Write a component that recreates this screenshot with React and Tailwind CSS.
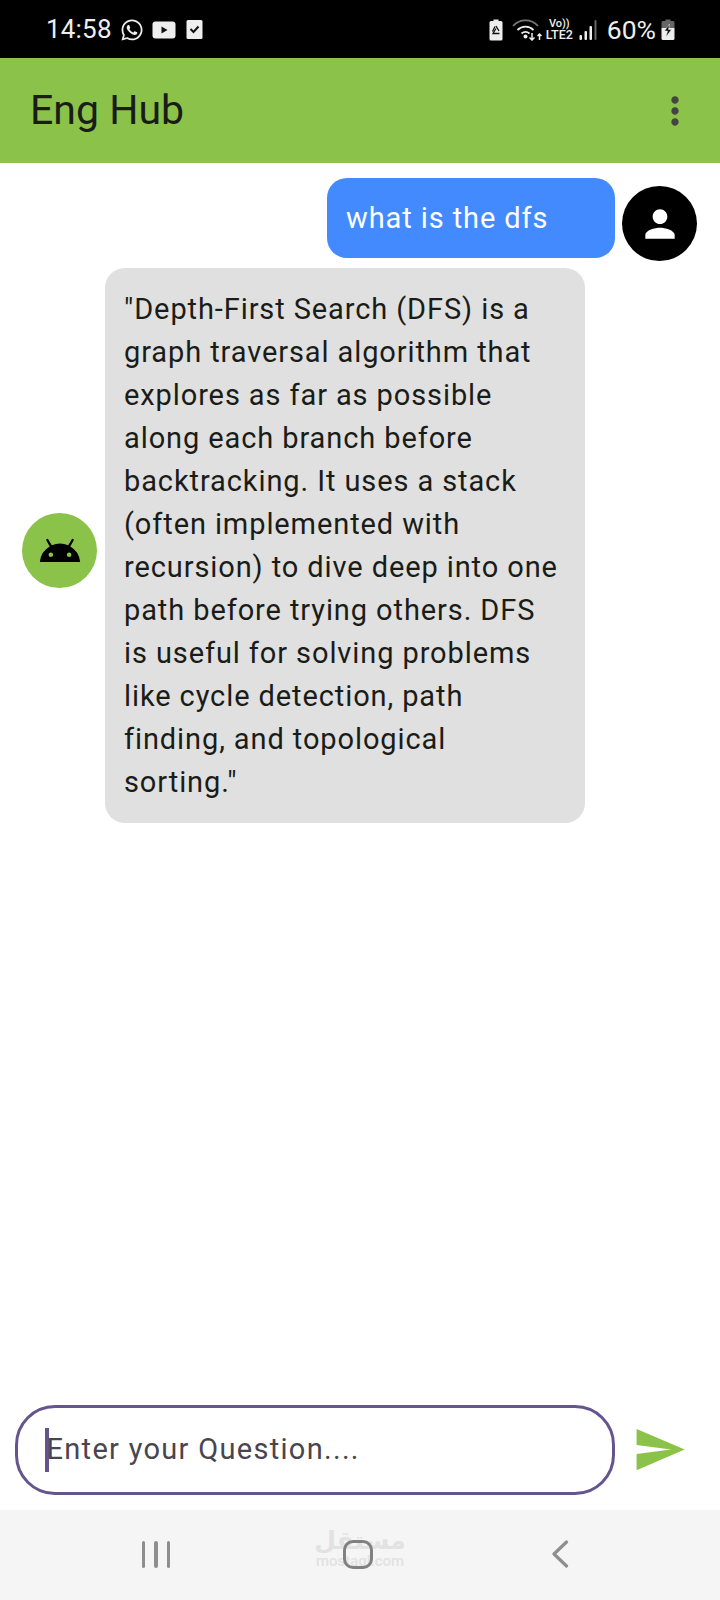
import React from 'react';
import { FaWhatsapp } from 'react-icons/fa';
import { MdPerson, MdAndroid, MdSend, MdMoreVert } from 'react-icons/md';

const font = { fontFamily: 'Roboto, sans-serif' };

const YoutubeIcon = () => (
  <svg width="24" height="18" viewBox="0 0 24 18">
    <rect x="0.5" y="0.5" width="23" height="17" rx="3" fill="#eee" />
    <path d="M9.5 5.5 L15.5 9 L9.5 12.5 Z" fill="#111" />
  </svg>
);

const TaskIcon = () => (
  <svg width="17" height="21" viewBox="0 0 17 21">
    <path d="M2 1 H15 Q16.500 1 16.500 2.500 V18.500 Q16.500 20 15 20 H2 Q0.500 20 0.500 18.500 V2.500 Q0.500 1 2 1 Z" fill="#eee" />
    <path d="M4.500 10 L7.500 13 L12.500 7.500" fill="none" stroke="#111" strokeWidth="2" />
  </svg>
);

const BatteryRecycle = () => (
  <svg width="14" height="22" viewBox="0 0 14 22">
    <path d="M4.500 0.500 H9.500 V2 H12 Q13.500 2 13.500 3.500 V20 Q13.500 21.500 12 21.500 H2 Q0.500 21.500 0.500 20 V3.500 Q0.500 2 2 2 H4.500 Z" fill="#eee" />
    <path d="M7 7 L10 12 M10.500 14.500 H4 L7 9.500 M3.500 12.500 L6 7.500" fill="none" stroke="#111" strokeWidth="1.300" />
  </svg>
);

const WifiIcon = () => (
  <svg width="32" height="22" viewBox="0 0 32 22">
    <path d="M1 7 C8 -0.500 19 -0.500 26 7" fill="none" stroke="#777" strokeWidth="1.800" />
    <path d="M5.500 11 C10 6.500 17 6.500 21.500 11" fill="none" stroke="#eee" strokeWidth="1.800" />
    <path d="M9.500 14.500 C12 12.500 15 12.500 17.500 14.500" fill="none" stroke="#eee" strokeWidth="1.800" />
    <circle cx="13.500" cy="17.500" r="2" fill="#eee" />
    <path d="M20 14 V21 M17.500 18.500 L20 21 L22.500 18.500" fill="none" stroke="#eee" strokeWidth="1.500" />
    <path d="M27.500 21 V15 M25.500 17 L27.500 15 L29.500 17" fill="none" stroke="#eee" strokeWidth="1.500" />
  </svg>
);

const SignalIcon = () => (
  <svg width="18" height="20" viewBox="0 0 18 20">
    <rect x="0.500" y="15" width="2.500" height="5" rx="1" fill="#eee" />
    <rect x="5.500" y="11" width="2.500" height="9" rx="1" fill="#eee" />
    <rect x="10.500" y="6" width="2.500" height="14" rx="1" fill="#eee" />
    <rect x="15.500" y="0" width="2" height="20" rx="1" fill="#666" />
  </svg>
);

const BatteryCharging = () => (
  <svg width="14" height="21" viewBox="0 0 14 21">
    <path d="M4.500 0.500 H9.500 V2 H12 Q13.500 2 13.500 3.500 V9 H0.500 V3.500 Q0.500 2 2 2 H4.500 Z" fill="#666" />
    <path d="M0.500 9 H13.500 V19.500 Q13.500 21 12 21 H2 Q0.500 21 0.500 19.500 Z" fill="#eee" />
    <path d="M8.500 5 L3.500 12 H6.500 L5 18 L10.500 10.500 H7.500 Z" fill="#111" stroke="#eee" strokeWidth="0.500" />
  </svg>
);

export default function App() {
  return (
    <div className="flex flex-col h-[1600px] w-[720px] bg-white overflow-hidden" style={font}>
      {/* status bar */}
      <div className="h-[58px] bg-black flex items-center pl-[46px] pr-[45px] pt-[1px] text-[#eeeeee]">
        <span className="text-[26px] mr-[8px] tracking-[0.2px]">14:58</span>
        <FaWhatsapp className="text-[24px] mr-[8px]" />
        <YoutubeIcon />
        <span className="w-[10px]" />
        <TaskIcon />
        <div className="flex-1" />
        <BatteryRecycle />
        <span className="w-[9px]" />
        <WifiIcon />
        <div className="flex flex-col items-center leading-none text-[11px] font-medium ml-[2px] mr-[6px] w-[27px]">
          <span>Vo))</span>
          <span className="text-[12.500px]">LTE2</span>
        </div>
        <SignalIcon />
        <span className="text-[26.500px] ml-[10px] mr-[5px]">60%</span>
        <BatteryCharging />
      </div>

      {/* app bar */}
      <div className="h-[105px] bg-[#8bc34a] flex items-center justify-between pl-[30px] pr-[29px]">
        <span className="text-[41px] text-[#1a1c18]">Eng Hub</span>
        <MdMoreVert className="text-[#444444] text-[44px] mr-[-6px]" />
      </div>

      {/* chat */}
      <div className="flex-1 flex flex-col pt-[15px]">
        <div className="flex items-start justify-end pr-[23px] gap-[7px]">
          <div className="bg-[#448aff] text-white rounded-[20px] px-[19px] pt-[2px] h-[80px] w-[288px] flex items-center text-[29px] tracking-[0.9px]">
            what is the dfs
          </div>
          <div className="mt-[8px] w-[75px] h-[75px] rounded-full bg-black flex items-center justify-center">
            <MdPerson className="text-white text-[44px]" />
          </div>
        </div>
        <div className="flex items-center pl-[22px] gap-[8px] mt-[7px]">
          <div className="mt-[10px] w-[75px] h-[75px] rounded-full bg-[#8bc34a] flex items-center justify-center">
            <MdAndroid className="text-black text-[44px]" />
          </div>
          <div className="bg-[#e0e0e0] text-[#1a1c18] rounded-[20px] w-[480px] px-[19px] pt-[20px] pb-[19px] text-[29px] leading-[43px] tracking-[0.9px]">
            <p>"Depth-First Search (DFS) is a</p>
            <p>graph traversal algorithm that</p>
            <p>explores as far as possible</p>
            <p>along each branch before</p>
            <p>backtracking. It uses a stack</p>
            <p>(often implemented with</p>
            <p>recursion) to dive deep into one</p>
            <p>path before trying others. DFS</p>
            <p>is useful for solving problems</p>
            <p>like cycle detection, path</p>
            <p>finding, and topological</p>
            <p>sorting."</p>
          </div>
        </div>
      </div>

      {/* input row */}
      <div className="flex items-center pl-[15px] pb-[15px]">
        <div className="w-[600px] h-[90px] rounded-[40px] border-[3px] border-[#65558f] flex items-center pl-[27px]">
          <span className="w-[3.500px] h-[44px] bg-[#65558f] mr-[-2px]" />
          <span className="text-[29px] tracking-[1.3px] text-[#49454f]">Enter your Question....</span>
        </div>
        <MdSend className="text-[#8bc34a] text-[55px] ml-[17px] mt-[-1px]" />
      </div>

      {/* nav bar */}
      <div className="relative h-[90px] bg-[#f5f5f5] flex items-center pl-[55px] pb-[2px]">
        <div className="absolute left-[317px] top-[17px] w-[86px] flex flex-col items-center text-[#e2e2e2]">
          <span className="text-[25px] leading-[27px] font-bold" style={{ fontFamily: '"DejaVu Sans", sans-serif' }}>مستقل</span>
          <span className="text-[15px] leading-[15px] font-medium">mostaql.com</span>
        </div>
        <div className="relative w-[202px] flex justify-center">
          <div className="flex gap-[9px]">
            <span className="w-[3.500px] h-[27px] rounded-full bg-[#8e8e8e]" />
            <span className="w-[3.500px] h-[27px] rounded-full bg-[#8e8e8e]" />
            <span className="w-[3.500px] h-[27px] rounded-full bg-[#8e8e8e]" />
          </div>
        </div>
        <div className="relative w-[202px] flex justify-center">
          <span className="w-[30px] h-[29px] rounded-[10px] border-[3.500px] border-[#808080]" />
        </div>
        <div className="relative w-[202px] flex justify-center">
          <svg width="18" height="28" viewBox="0 0 18 28">
            <path d="M15.500 2 L3 14 L15.500 26" fill="none" stroke="#8e8e8e" strokeWidth="3.200" strokeLinecap="round" strokeLinejoin="round" />
          </svg>
        </div>
      </div>
    </div>
  );
}
